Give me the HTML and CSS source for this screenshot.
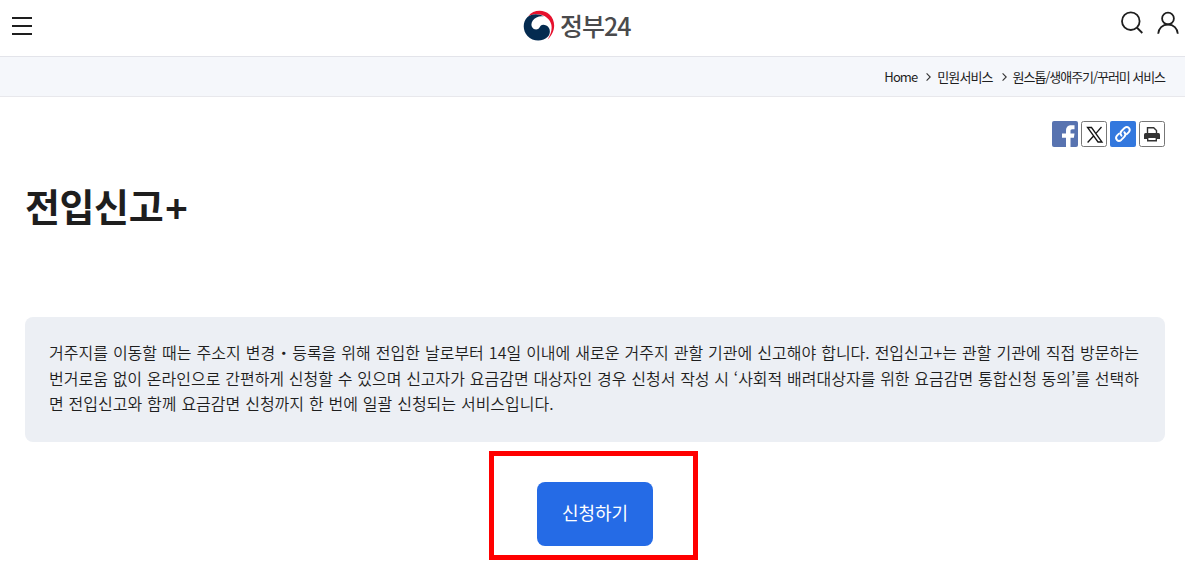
FILE: index.html
```html
<!DOCTYPE html>
<html lang="ko">
<head>
<meta charset="utf-8">
<title>전입신고+ | 정부24</title>
<link rel="stylesheet" href="styles.css">
</head>
<body>
<header class="header">
  <button class="icon-btn menu" aria-label="메뉴"><svg width="20" height="18" viewBox="0 0 20 18"><path d="M0 1h20M0 9h20M0 17h20" stroke="#1e1e1e" stroke-width="2"/></svg></button>
  <a class="logo">
    <svg class="emblem" width="32" height="32" viewBox="0 0 32 32">
      <path d="M5.3 6.2C10-.4 20.500-1 26.500 4.500C33 10.500 33 22 24.600 29.500C28.500 23.500 30 17 27.200 11.800C24 5.500 15 2 5.300 6.200Z" fill="#e6112d"/>
      <path d="M4.500 7C-.6 12-.5 20.500 4.500 26C10 32 20 32 25 26.500C28 23 27.300 17.300 23.300 15.500C19.500 13.700 17.500 15.300 16.500 17.500C15.300 20.200 10.700 20.300 9 17C7.300 13.500 9.500 9.500 13.500 7.500C16 6.200 19 6 21 6.700C16 3.500 9 3.500 4.500 7Z" fill="#042b50"/>
    </svg>
    <span class="logo-text">정부24</span>
  </a>
  <div class="tools">
    <button class="icon-btn" aria-label="검색"><svg width="24" height="24" viewBox="0 0 24 24" fill="none" stroke="#1e1e1e" stroke-width="1.800"><circle cx="10.800" cy="10.200" r="8.800"/><path d="M16.800 16.500l5.500 5.500"/></svg></button>
    <button class="icon-btn" aria-label="로그인"><svg width="24" height="24" viewBox="0 0 24 24" fill="none" stroke="#1e1e1e" stroke-width="1.800"><circle cx="12" cy="7.500" r="5.900"/><path d="M2.200 22.800C2.500 17.300 6.500 13.500 12 13.500S21.500 17.300 21.800 22.800"/></svg></button>
  </div>
</header>
<nav class="breadcrumb">
  <span>Home</span>
  <svg class="arrow" width="5" height="8" viewBox="0 0 5 8"><path d="M.6.4L4.200 4L.6 7.600" fill="none" stroke="#333" stroke-width="1.100"/></svg>
  <span>민원서비스</span>
  <svg class="arrow" width="5" height="8" viewBox="0 0 5 8"><path d="M.6.4L4.200 4L.6 7.600" fill="none" stroke="#333" stroke-width="1.100"/></svg>
  <span class="current">원스톱/생애주기/꾸러미 서비스</span>
</nav>
<main class="content">
  <div class="share">
    <svg width="26" height="26" viewBox="0 0 26 26"><rect width="26" height="26" rx="2" fill="#5873b0"/><path d="M14 26V16.800h-4v-4.300H14V10C14 6 16 4.300 19.300 4.300H22.500v4h-2.200c-1.400 0-1.800.7-1.800 1.800v2.400h4l-.6 4.300h-3.400V26Z" fill="#fff"/></svg>
    <svg width="26" height="26" viewBox="0 0 26 26"><rect x=".5" y=".5" width="25" height="25" rx="2" fill="#fff" stroke="#777"/><path d="M6.500 6.500h4l10.500 14.500h-4ZM20.500 6L14.500 12.900M12.800 14.700L6.600 21.500" fill="none" stroke="#151515" stroke-width="1.300"/></svg>
    <svg width="26" height="26" viewBox="0 0 26 26"><rect width="26" height="26" rx="2" fill="#3378de"/><g fill="none" stroke="#fff" stroke-width="1.900" stroke-linecap="round"><path d="M11.500 14.700C10 13 10.200 11.300 11.500 10l3-3c3.200-2.600 6.900 1 4.300 4.200l-2 2"/><path d="M14.300 11.200c1.600 1.700 1.300 3.400 0 4.700l-3 3c-3.200 2.600-6.900-1-4.300-4.200l2-2"/></g></svg>
    <svg width="26" height="26" viewBox="0 0 26 26"><rect x=".5" y=".5" width="25" height="25" rx="2" fill="#fff" stroke="#777"/><path d="M8.500 12V6.700h6.200L17.500 9.500V12" fill="none" stroke="#333" stroke-width="1.400"/><path d="M6.500 12h13a1.500 1.500 0 0 1 1.500 1.500v4.500H5V13.500a1.500 1.500 0 0 1 1.500-1.500Z" fill="#333"/><path d="M8.700 16.200h8.600v3.500H8.700Z" fill="#fff" stroke="#333" stroke-width="1.400"/></svg>
  </div>
  <h1 class="title">전입신고<span class="plus">+</span></h1>
  <p class="notice">
    <span class="line full">거주지를 이동할 때는 주소지 변경・등록을 위해 전입한 날로부터 14일 이내에 새로운 거주지 관할 기관에 신고해야 합니다. 전입신고+는 관할 기관에 직접 방문하는</span>
    <span class="line full">번거로움 없이 온라인으로 간편하게 신청할 수 있으며 신고자가 요금감면 대상자인 경우 신청서 작성 시 ‘사회적 배려대상자를 위한 요금감면 통합신청 동의’를 선택하</span>
    <span class="line">면 전입신고와 함께 요금감면 신청까지 한 번에 일괄 신청되는 서비스입니다.</span>
  </p>
  <div class="highlight"><button class="apply">신청하기</button></div>
</main>
</body>
</html>
```
FILE: styles.css
```css
* { box-sizing: border-box; }
body {
  margin: 0;
  height: 565px;
  overflow: hidden;
  background: #fff;
  color: #1e1e1e;
  font-family: "Noto Sans CJK KR", "Noto Sans", sans-serif;
}
button { border: 0; padding: 0; background: none; font-family: inherit; }
svg { display: block; flex: none; }
.header {
  display: grid;
  grid-template-columns: 511px 1fr auto;
  height: 56px;
  padding: 0 5px 0 12px;
}
.menu { justify-self: start; align-self: start; margin-top: 17px; }
.logo { display: flex; padding-top: 10px; }
.logo-text {
  margin: -1px 0 0 5px;
  font-size: 25px;
  line-height: 32px;
  font-weight: 500;
  letter-spacing: -1px;
  color: #4a4a4c;
}
.tools { display: flex; align-items: flex-start; gap: 12px; padding-top: 11px; }
.breadcrumb {
  display: flex;
  align-items: center;
  justify-content: flex-end;
  height: 41px;
  padding-right: 19px;
  border-top: 1px solid #e3e4ea;
  border-bottom: 1px solid #e8e8ec;
  background: #f5f7fb;
  font-size: 13px;
  letter-spacing: -0.9px;
  white-space: nowrap;
}
.current { margin-right: 1px; letter-spacing: -1.06px; }
.arrow { margin: 1px 6px 0 9px; }
.content { padding: 24px 20px 0 25px; }
.share { display: flex; justify-content: flex-end; gap: 3px; }
.title {
  margin: 29px 0 0;
  font-size: 38px;
  line-height: 58px;
  font-weight: 700;
  letter-spacing: -0.4px;
}
.plus { position: relative; top: 2px; left: 2px; }
.notice {
  height: 125px;
  margin: 83px 0 0;
  padding: 23px 26px 24px 24px;
  border-radius: 8px;
  background: #eceff4;
  font-size: 16px;
  line-height: 25.6px;
  font-weight: 350;
}
.line { display: block; word-spacing: 0.4px; }
.full { word-spacing: 0; text-align-last: justify; }
.highlight {
  width: 209px;
  height: 109px;
  margin: 9px 0 0 464px;
  padding: 26px 0 0 43px;
  border: 5px solid #f00;
}
.apply {
  width: 116px;
  height: 64px;
  padding-bottom: 5px;
  border-radius: 8px;
  background: #256be6;
  color: #fff;
  font-size: 18px;
}
```
